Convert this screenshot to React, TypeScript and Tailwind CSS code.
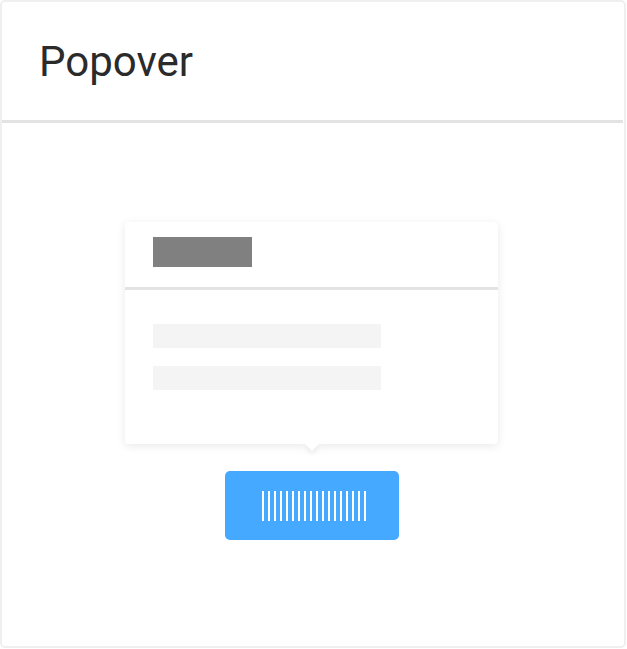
import React from 'react';

const stripes = Array.from({ length: 18 });

export default function App() {
	return (
		<div className="w-[627px] h-[649px] bg-white" style={{ fontFamily: 'Roboto, "Liberation Sans", sans-serif' }}>
			<div className="w-[626px] h-[648px] border-2 border-[#efefef] rounded-[5px] flex flex-col overflow-hidden">
				{/* Header */}
				<div className="h-[118px] shrink-0 pl-[37px] pt-[39px]">
					<h1 className="text-[42px] leading-[42px] text-[#2b2b2b] font-normal">Popover</h1>
				</div>
				<div className="h-[3px] bg-[#e3e3e3] mr-[1px] shrink-0" />

				{/* Body */}
				<div className="flex-1 flex flex-col items-center pt-[99px] pr-[3px]">
					<div className="relative w-[373px] bg-white rounded-[4px] shadow-[0_2px_10px_rgba(0,0,0,0.09)]">
						<div className="h-[65px] pl-[28px] pt-[15px]">
							<div className="w-[99px] h-[30px] bg-[#808080]" />
						</div>
						<div className="h-[3px] bg-[#e3e3e3]" />
						<div className="pl-[28px] pt-[34px] pb-[54px] flex flex-col gap-[18px]">
							<div className="w-[228px] h-[24px] bg-[#f4f4f4]" />
							<div className="w-[228px] h-[24px] bg-[#f4f4f4]" />
						</div>
						{/* Arrow */}
						<div className="absolute left-1/2 -bottom-[5px] -translate-x-1/2 w-[10px] h-[10px] rotate-45 bg-white shadow-[3px_3px_5px_rgba(0,0,0,0.06)]" />
					</div>

					<div className="mt-[27px] w-[174px] h-[69px] rounded-[5px] bg-[#45a9ff] flex items-center justify-center">
						<div className="flex gap-[4px] h-[30px] items-stretch ml-[4px]">
							{stripes.map((_, i) => (
								<div key={i} className="w-[2px] bg-white" />
							))}
						</div>
					</div>
				</div>
			</div>
		</div>
	);
}
